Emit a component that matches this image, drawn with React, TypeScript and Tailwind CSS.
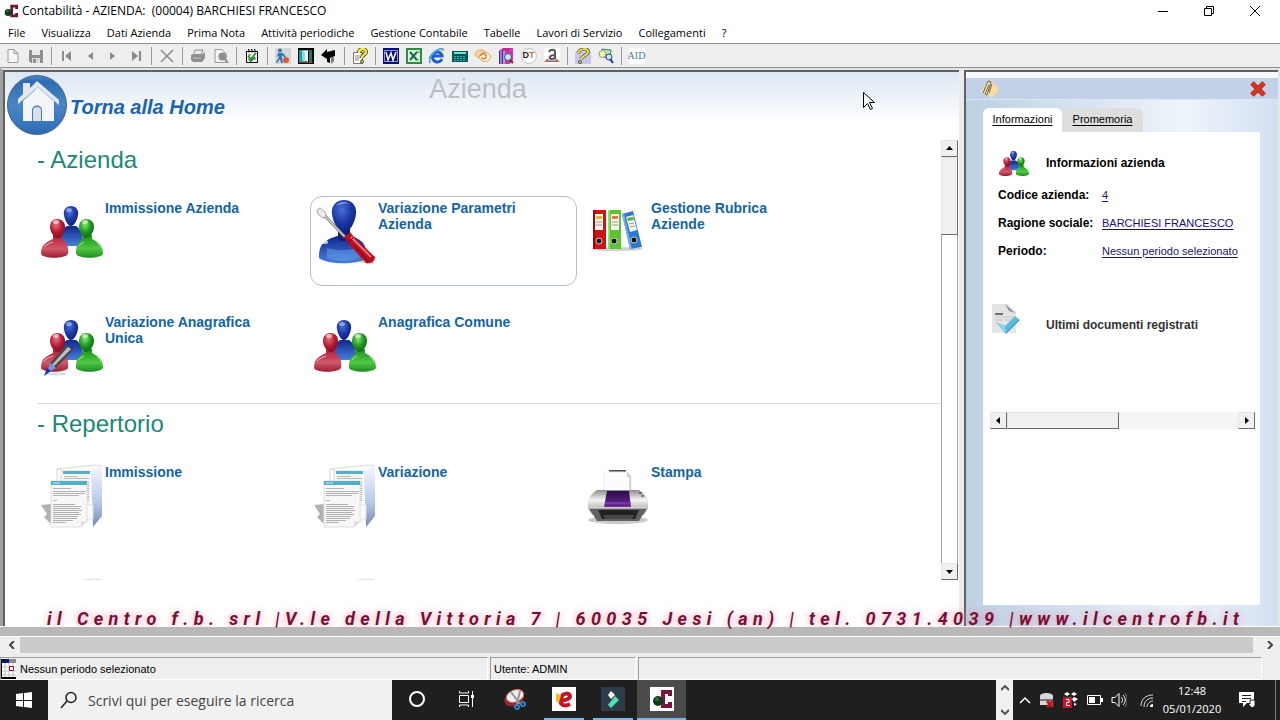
import React from 'react';
import clsx from 'clsx';

interface IconProps {
  className?: string;
}

/* ---------- toolbar icons (16x16) ---------- */

const toolIcons: Record<string, React.ReactNode> = {
  nuovo: <path d="M3 1.500h6l4 4v9H3zM9 1.500v4h4" fill="#f6f6f6" stroke="#9a9a9a" />,
  salva: (
    <>
      <path d="M1 2h14v13H3l-2-2z" fill="#8f8f8f" />
      <path d="M4 2h8v5H4z" fill="#e9e9e9" />
      <path d="M4 10h8v5H4z" fill="#dcdcdc" />
      <path d="M5 11h3v4H5z" fill="#8f8f8f" />
    </>
  ),
  primo: <path d="M3 3h2v10H3zM12 3v10L6 8z" fill="#8a8a8a" />,
  precedente: <path d="M11 4v8L6 8z" fill="#8a8a8a" />,
  successivo: <path d="M5 4v8l5-4z" fill="#8a8a8a" />,
  ultimo: <path d="M11 3h2v10h-2zM4 3v10l6-5z" fill="#8a8a8a" />,
  elimina: <path d="M2 2l12 12M14 2L2 14" stroke="#8a8a8a" strokeWidth="1.500" fill="none" />,
  stampa: (
    <>
      <path d="M5 2h8l-2 5H3z" fill="#e8e8e8" stroke="#8f8f8f" />
      <path d="M1 7l2-1h10l2-2v6l-3 4H3l-2-2z" fill="#8f8f8f" />
      <path d="M3 10h8" stroke="#c4c4c4" />
    </>
  ),
  anteprima: (
    <>
      <path d="M2 1.500h7l4 4v9H2z" fill="#f2f2f2" stroke="#9a9a9a" />
      <circle cx="9.500" cy="8.500" r="4" fill="#8f8f8f" />
      <path d="M12 11l3 4" stroke="#8f8f8f" strokeWidth="2" />
    </>
  ),
  verifica: (
    <>
      <path d="M2.500 3.500h11v11h-11z" fill="#fff" stroke="#000" />
      <path d="M4 1.500h1v3M7 1.500h1v3M10 1.500h1v3" stroke="#000" fill="none" />
      <path d="M4 7h3M4 11h2M10 11h2" stroke="#444" />
      <path d="M4 8l3 3 5-6M5 12l2 1 4-4" stroke="#18861c" strokeWidth="1.500" fill="none" />
    </>
  ),
  persona: (
    <>
      <path d="M0 0h16v16H0z" fill="#d2d6da" />
      <circle cx="5" cy="2.500" r="2" fill="#2a78b4" />
      <path d="M3 5h5l3 4-1 1-3-3v3l1 5H6l-1-4-3 4-1-1 3-5V8l-2 1z" fill="#2a78b4" />
      <circle cx="11" cy="12" r="3" fill="#e0572c" />
    </>
  ),
  porta: (
    <>
      <path d="M0 0h16v16H0z" fill="#000" />
      <path d="M1 2h6v12H1z" fill="#12a6a0" />
      <path d="M4 3l6-1v12l-6-2z" fill="#fff" />
      <path d="M4 3l3 1v10l-3-2z" fill="#7ee0dc" />
      <path d="M11 2h3v12h-3z" fill="#087f7b" />
      <path d="M1 14h14v1H1z" fill="#a5302a" />
    </>
  ),
  indietro: (
    <>
      <path d="M0 7l6-6v3l8-2v6l-5 2v5l-3-1v-3z" fill="#000" />
      <path d="M10 10l3-2v5l-3 3z" fill="#777" />
    </>
  ),
  documento: (
    <>
      <path d="M1.500 4.500h9v11h-9z" fill="#fff" stroke="#777" />
      <path d="M3 8h5M3 10h5M3 12h4" stroke="#888" />
      <path d="M7 5c0-5 7-5 7-1 0 3-4 2-4 6" fill="none" stroke="#333" strokeWidth="4" />
      <path d="M7 5c0-5 7-5 7-1 0 3-4 2-4 6" fill="none" stroke="#f4ee2c" strokeWidth="2.500" />
      <circle cx="10" cy="13.500" r="1.500" fill="#f4ee2c" stroke="#333" />
    </>
  ),
  word: (
    <>
      <path d="M0 0h16v16H0z" fill="#06107c" />
      <path d="M1.500 2.500h13v11h-13z" fill="none" stroke="#8c98dc" />
      <path d="M3 4l2 8 3-7 2 7 3-8" fill="none" stroke="#fff" strokeWidth="1.500" />
    </>
  ),
  excel: (
    <>
      <path d="M0 0h16v16H0z" fill="#2f8c44" />
      <path d="M2 2h12v12H2z" fill="#dff4e4" />
      <path d="M4 4l7 8M11 4l-7 8" stroke="#14703a" strokeWidth="2" />
      <path d="M9 12h4M10 4h4" stroke="#2f8c44" />
    </>
  ),
  explorer: (
    <>
      <path d="M13 11a5 5 0 1 1 0-4v1H5" fill="none" stroke="#1c62c0" strokeWidth="3" />
      <path d="M1 15C-2 9 9-2 15 2" fill="none" stroke="#4ca0e8" strokeWidth="2" />
      <path d="M11 1l3 1-1 3" fill="#f0cd3c" />
    </>
  ),
  calcolatrice: (
    <>
      <path d="M0 3h16v11H0z" fill="#04575a" />
      <path d="M2 4h12v2H2z" fill="#7be0c8" />
      <path d="M2 8.500h12M2 10.500h12M2 12.500h12" stroke="#31b4a2" strokeDasharray="2 1" />
    </>
  ),
  spirale: (
    <>
      <ellipse cx="6" cy="6" rx="5.500" ry="4" fill="#f5d7a0" stroke="#e5a24a" />
      <ellipse cx="10" cy="9" rx="5.500" ry="4.500" fill="#fff3db" stroke="#d9a45c" />
      <path d="M5 8c2-4 7-2 6 1s-4 2-4 0" fill="none" stroke="#d08434" strokeWidth="1.500" />
    </>
  ),
  libro: (
    <>
      <path d="M1 3l4-3h10l-3 3z" fill="#c42b9c" />
      <path d="M1 3h4v13H1z" fill="#3a2ca8" />
      <path d="M5 3h7l3-3v12l-3 4H5z" fill="#c23aa4" />
      <path d="M3 3v13M6 3v13" stroke="#e8e0ff" />
      <circle cx="10" cy="9" r="3.500" fill="#b9effa" stroke="#4a4a86" />
      <path d="M12 12l3 3" stroke="#9c1c1c" strokeWidth="2" />
    </>
  ),
  conto: (
    <>
      <path d="M0 0h16v16H0z" fill="#fff" />
      <path d="M5 4c1-3 6-3 6 0v7M11 7c-6 0-7 4-3 4 2 0 3-1 3-2" fill="none" stroke="#5a5560" strokeWidth="2" />
      <path d="M0 14l3-3h2l-1 2h8l-1-2h2l3 3z" fill="#e0653a" />
      <path d="M4 13h8" stroke="#3b74b8" />
    </>
  ),
  aiuto: (
    <>
      <path d="M0 4h16v12H0z" fill="#c9c4f0" />
      <path d="M3 5c2-5 11-5 10-1-1 4-5 3-7 7" fill="none" stroke="#555" strokeWidth="3.500" />
      <path d="M3 5c2-5 11-5 10-1-1 4-5 3-7 7" fill="none" stroke="#ece64a" strokeWidth="2" />
      <circle cx="5" cy="14" r="1.500" fill="#ece64a" stroke="#444" />
    </>
  ),
  cerca: (
    <>
      <path d="M4 1l9 1-1 8-8-1z" fill="#b5e5b8" stroke="#3d8c62" />
      <circle cx="4.500" cy="6" r="3.500" fill="#f3f1a8" stroke="#8f9c80" />
      <circle cx="11" cy="9" r="3" fill="#c6ecfa" stroke="#2b3f88" />
      <path d="M12 11l3 4" stroke="#20309a" strokeWidth="2" />
    </>
  ),
};

const ToolIcon: React.FC<{ name: string }> = ({ name }) => {
  if (name === 'dt') {
    return (
      <span className="flex size-4 items-center justify-center rounded-full border border-[#c4c4c4] bg-white font-['Liberation_Sans'] text-[9px] font-bold leading-none">
        <span className="text-[#222]">D</span>
        <span className="text-[#d9651c]">T</span>
      </span>
    );
  }
  if (name === 'ad') {
    return (
      <span className="flex size-4 items-center justify-center bg-white font-['Liberation_Serif'] text-[10px] leading-none">
        <span className="text-[#3f74a4]">A</span>
        <span className="text-[#3e9c4c]">I</span>
        <span className="text-[#3f74a4]">D</span>
      </span>
    );
  }
  return (
    <svg viewBox="0 0 16 16" className="size-4">
      {toolIcons[name]}
    </svg>
  );
};

/* ---------- big icons (66x66) ---------- */

const Gradients = () => (
  <defs>
    <radialGradient id="gBlue" cx="0.4" cy="0.3" r="0.8">
      <stop offset="0" stopColor="#4a70d8" />
      <stop offset="0.5" stopColor="#1a38a4" />
      <stop offset="1" stopColor="#0a1a6e" />
    </radialGradient>
    <radialGradient id="gRed" cx="0.4" cy="0.3" r="0.8">
      <stop offset="0" stopColor="#e87080" />
      <stop offset="0.5" stopColor="#b41c34" />
      <stop offset="1" stopColor="#78081c" />
    </radialGradient>
    <radialGradient id="gGreen" cx="0.4" cy="0.3" r="0.8">
      <stop offset="0" stopColor="#80e870" />
      <stop offset="0.5" stopColor="#209420" />
      <stop offset="1" stopColor="#0a6010" />
    </radialGradient>
    <linearGradient id="gBlueBody" x1="0" y1="0" x2="0" y2="1">
      <stop offset="0" stopColor="#12268c" />
      <stop offset="1" stopColor="#4580dc" />
    </linearGradient>
    <linearGradient id="gRedBody" x1="0" y1="0" x2="0" y2="1">
      <stop offset="0" stopColor="#b01c30" />
      <stop offset="0.6" stopColor="#d0586c" />
      <stop offset="1" stopColor="#9c1c30" />
    </linearGradient>
    <linearGradient id="gGreenBody" x1="0" y1="0" x2="0" y2="1">
      <stop offset="0" stopColor="#159018" />
      <stop offset="0.6" stopColor="#50c844" />
      <stop offset="1" stopColor="#1c8c1c" />
    </linearGradient>
    <linearGradient id="gSide" x1="0" y1="0" x2="0" y2="1">
      <stop offset="0" stopColor="#f4f7fd" />
      <stop offset="0.6" stopColor="#b5c8ec" />
      <stop offset="1" stopColor="#7488ae" />
    </linearGradient>
    <linearGradient id="gSilver" x1="0" y1="0" x2="0" y2="1">
      <stop offset="0" stopColor="#8c8c8c" />
      <stop offset="0.4" stopColor="#f4f4f4" />
      <stop offset="1" stopColor="#8c8c8c" />
    </linearGradient>
    <linearGradient id="gPurple" x1="0" y1="0" x2="0" y2="1">
      <stop offset="0" stopColor="#2c0a48" />
      <stop offset="1" stopColor="#6c2c9c" />
    </linearGradient>
  </defs>
);

const peopleShapes = (
  <>
    <path d="M21 48c-1-9 2-17 7-20h9c5 3 8 11 7 20z" fill="url(#gBlueBody)" />
    <path d="M32 8c5 0 8 4 7 9-1 6-4 11-7 11s-6-5-7-11c-1-5 2-9 7-9z" fill="url(#gBlue)" />
    <path d="M2 56c0-8 3-11 12-15v-4h9v4c5 3 7 8 6 15-3 5-25 5-27 0z" fill="url(#gRedBody)" />
    <path d="M18 21c5 0 8 3 8 8 0 6-4 11-7 11s-8-5-8-11c0-5 3-8 7-8z" fill="url(#gRed)" />
    <path d="M37 56c0-8 1-11 7-15v-4h9v4c8 4 11 7 11 15-3 5-24 5-27 0z" fill="url(#gGreenBody)" />
    <path d="M47 21c5 0 8 3 8 8 0 6-5 11-8 11s-7-5-7-11c0-5 3-8 7-8z" fill="url(#gGreen)" />
    <ellipse cx="30" cy="12" rx="3" ry="2" fill="#fff" opacity="0.4" />
    <ellipse cx="17" cy="24" rx="3" ry="2" fill="#fff" opacity="0.6" />
    <ellipse cx="46" cy="24" rx="3" ry="2" fill="#fff" opacity="0.6" />
    <path d="M5 49c3-3 6-4 9-5M40 48c1-2 3-3 5-4M58 45c2 1 4 3 4 5" stroke="#fff" opacity="0.6" fill="none" />
  </>
);

const PeopleIcon: React.FC<IconProps> = ({ className }) => (
  <svg viewBox="0 0 66 66" className={className}>
    <Gradients />
    {peopleShapes}
  </svg>
);

const PeoplePenIcon: React.FC<IconProps> = ({ className }) => (
  <svg viewBox="0 0 66 66" className={className}>
    <Gradients />
    {peopleShapes}
    <ellipse cx="17" cy="62" rx="11" ry="1.500" fill="#a9bdf0" opacity="0.5" />
    <path d="M28 33l6 5-17 18-6-5z" fill="#4a4a50" />
    <path d="M29 35l3 2-17 17-2-1z" fill="#c0c0c6" />
    <path d="M11 51l6 5-9 5z" fill="#6f98dc" />
    <path d="M8 56l4 3-7 5z" fill="#1434b8" />
    <path d="M28 33l6 5 1-4-3-3z" fill="#223a9c" />
  </svg>
);

const UserToolIcon: React.FC<IconProps> = ({ className }) => (
  <svg viewBox="0 0 66 66" className={className}>
    <Gradients />
    <path d="M7 60c0-13 3-17 18-22h14c12 4 16 9 16 22-8 7-40 7-48 0z" fill="url(#gBlueBody)" />
    <path d="M26 30h12v10c-3 4-9 4-12 0z" fill="#0c1c78" />
    <path d="M32 2c8 0 13 6 12 14-1 9-7 19-12 19S21 25 20 16C19 8 24 2 32 2z" fill="url(#gBlue)" />
    <path d="M24 8c3-5 10-5 14-2-5-1-10 0-14 2z" fill="#fff" opacity="0.4" />
    <ellipse cx="13" cy="44" rx="3" ry="2" fill="#fff" opacity="0.7" />
    <path d="M15 50c10 3 20 3 29 0l4 9c-10 5-23 5-33 1z" fill="#6ba4f2" opacity="0.5" />
    <path d="M42 60c8 4 14 5 20 4" stroke="#777" strokeWidth="3" opacity="0.4" fill="none" />
    <path d="M5 12l3-2 5 4 2 5-4 1-5-4z" fill="#ececec" stroke="#a4a4a4" />
    <path d="M13 18l20 21" stroke="#8d8d8d" strokeWidth="3" />
    <path d="M13 18l20 21" stroke="#f2f2f2" />
    <path d="M32 39l6-5 4 5 21 20c0 4-4 7-9 6L36 45z" fill="#b80f24" />
    <path d="M39 39l20 20" stroke="#f4707c" strokeWidth="2" />
    <path d="M43 48l12 14" stroke="#7c0414" />
    <path d="M36 45l6-6" stroke="#6c0410" />
  </svg>
);

const BindersIcon: React.FC<IconProps> = ({ className }) => (
  <svg viewBox="0 0 66 66" className={className}>
    <ellipse cx="32" cy="51" rx="26" ry="2" fill="#d0d0d0" />
    <path d="M8 12h13v39H8z" fill="#cf1414" />
    <path d="M8 12h2v39H8z" fill="#9c0606" />
    <path d="M23 12h13v39H23z" fill="#5cc42c" />
    <path d="M23 12h2v39h-2z" fill="#8fe364" />
    <path d="M37 16l11-3 9 36-12 2z" fill="#2c78cc" />
    <path d="M37 16l2-1 8 36h-2z" fill="#73aee8" />
    <path d="M10 16h8v16h-8zM26 16h8v16h-8zM41 19l7-2 4 15-7 2z" fill="#f7f4ec" />
    <path d="M11 18h6v3h-6z" fill="#ecb23c" />
    <path d="M27 18h6v3h-6z" fill="#e8705c" />
    <path d="M42 20l6-1 1 3-6 1z" fill="#4cba3c" />
    <path d="M11 24h6M11 27h6M27 24h6M27 27h6M44 26l5-1M45 29l5-1" stroke="#9a9a9a" />
    <g fill="#111" stroke="#c8c8c8">
      <circle cx="14" cy="43" r="3" />
      <circle cx="29" cy="43" r="3" />
      <circle cx="49" cy="42" r="3" />
    </g>
  </svg>
);

const FolderDocsIcon: React.FC<IconProps> = ({ className }) => (
  <svg viewBox="0 0 66 66" className={className}>
    <Gradients />
    <path d="M2 43l10-1v20L5 55l3-3z" fill="#b2b2b2" />
    <path d="M18 7l38-4 7 1-8 5H18z" fill="#fbfbfc" stroke="#dcdcdc" />
    <path d="M18 7h4v14h-4z" fill="#fff" stroke="#d4d4d4" />
    <path d="M52 9l11-5v50l-9 11z" fill="url(#gSide)" />
    <path d="M23 9h28v52H23z" fill="#f4f4f4" />
    <path d="M24 9h27v3H24z" fill="#54b0c8" />
    <path d="M25 14.500h14M25 16.500h25" stroke="#bcbcbc" />
    <path d="M49 20v20" stroke="#b4b4b4" strokeWidth="2" strokeDasharray="1 1" />
    <path d="M45 43h9v14h-9z" fill="#fafafa" stroke="#e0e0e0" />
    <path d="M12 19h36v40l-6 6H12z" fill="#f7f7f7" stroke="#e0e0e0" />
    <path d="M12 19h36v4H12z" fill="#4fb0c6" />
    <path d="M14 21h7" stroke="#c9f0f7" />
    <path d="M14 26.500h18M14 29.500h33M14 31.500h32M14 33.500h26M14 38.500h4" stroke="#b4b4b4" />
    <path
      d="M14 42.500h22M14 44.500h28M14 46.500h27M14 48.500h29M14 50.500h26M14 52.500h28M14 54.500h25M14 56.500h24M14 58.500h20M14 60.500h13"
      stroke="#b0b0b0"
    />
    <path d="M42 65l6-6-6 1z" fill="#dedede" />
  </svg>
);

const PrinterIcon: React.FC<IconProps> = ({ className }) => (
  <svg viewBox="0 0 66 66" className={className}>
    <Gradients />
    <ellipse cx="33" cy="58" rx="30" ry="4" fill="#b4b4b4" opacity="0.7" />
    <path d="M24 8h17v4H24z" fill="#4c4c4c" />
    <path d="M19 10h24l3 4v16H19z" fill="#fcfcfc" stroke="#ececec" />
    <path d="M45 14v14" stroke="#b4b4b4" />
    <path d="M42 10l4 5h-4z" fill="#c8c8c8" />
    <path d="M12 28h42c5 3 8 7 9 11v7c-1 3-3 5-5 7H8c-2-2-4-4-5-7v-7c1-4 4-8 9-11z" fill="url(#gSilver)" />
    <path d="M4 46h58l-8 13H12z" fill="#626262" />
    <path d="M13 48h41l-4 9H17z" fill="#222" />
    <path d="M18 53h31l-2 4H20z" fill="#484848" />
    <path d="M22 29h22l2 16H19z" fill="url(#gPurple)" />
    <path d="M20 41h26" stroke="#8a4cb4" />
    <path d="M4 46h58" stroke="#ececec" />
    <path d="M54 31h3M56 34h3" stroke="#333" />
  </svg>
);

const HomeIcon: React.FC<IconProps> = ({ className }) => (
  <svg viewBox="0 0 60 60" className={className}>
    <defs>
      <linearGradient id="homeBg" x1="0" y1="0" x2="0" y2="1">
        <stop offset="0" stopColor="#4a8cca" />
        <stop offset="0.1" stopColor="#2c6cb0" />
        <stop offset="0.5" stopColor="#4a86c6" />
        <stop offset="1" stopColor="#2c6cb4" />
      </linearGradient>
    </defs>
    <circle cx="30" cy="30" r="29.500" fill="url(#homeBg)" stroke="#4c6484" />
    <path d="M16 26L31 12l16 14v20H35V35c0-6-10-6-10 0v11H16z" fill="#f3f5f8" />
    <path d="M26 46V35c0-4 8-4 8 0v11z" fill="#dcdfe6" />
    <path d="M11 29v-5l5-5V8h7v5l7-7 22 19v5L31 12z" fill="#e4e8ee" />
    <path d="M16 26l15-14 16 14" fill="none" stroke="#b4c4d8" />
  </svg>
);

const ContabilitaLogo: React.FC<IconProps> = ({ className }) => (
  <svg viewBox="0 0 20 20" className={className}>
    <path d="M18 7V3h-7v14h7v-4" fill="none" stroke="#76143e" strokeWidth="4" />
    <circle cx="6" cy="12" r="5" fill="#123a1c" />
    <circle cx="5" cy="10" r="2" fill="#2c6c38" />
  </svg>
);

const CheckedDocIcon: React.FC<IconProps> = ({ className }) => (
  <svg viewBox="0 0 30 32" className={className}>
    <path d="M1 1h16l8 8v21H1z" fill="#e4e4e4" />
    <path d="M14 1l10 9-6-2z" fill="#8c8c8c" />
    <path d="M4 11h8" stroke="#444" strokeWidth="1.500" />
    <path d="M4 14h18M4 17h8M14 17h8" stroke="#c4c4c4" />
    <path d="M5 19l9 4 10-10 5 4-14 14z" fill="#58bcdc" />
    <path d="M5 19l9 4 1 8z" fill="#8cd4ec" />
    <path d="M15 30l13-13" fill="none" stroke="#2a90bc" />
  </svg>
);

/* ---------- data ---------- */

const menuItems = [
  'File',
  'Visualizza',
  'Dati Azienda',
  'Prima Nota',
  'Attività periodiche',
  'Gestione Contabile',
  'Tabelle',
  'Lavori di Servizio',
  'Collegamenti',
  '?',
];

const toolGroups = [
  ['nuovo', 'salva'],
  ['primo', 'precedente', 'successivo', 'ultimo'],
  ['elimina'],
  ['stampa', 'anteprima'],
  ['verifica'],
  ['persona', 'porta', 'indietro'],
  ['documento'],
  ['word', 'excel', 'explorer', 'calcolatrice', 'spirale', 'libro', 'dt', 'conto'],
  ['aiuto', 'cerca'],
  ['ad'],
];

interface Entry {
  label: string;
  icon: React.FC<IconProps>;
  active?: boolean;
}

const sections: { title: string; entries: Entry[] }[] = [
  {
    title: 'Azienda',
    entries: [
      { label: 'Immissione Azienda', icon: PeopleIcon },
      { label: 'Variazione Parametri Azienda', icon: UserToolIcon, active: true },
      { label: 'Gestione Rubrica Aziende', icon: BindersIcon },
      { label: 'Variazione Anagrafica Unica', icon: PeoplePenIcon },
      { label: 'Anagrafica Comune', icon: PeopleIcon },
    ],
  },
  {
    title: 'Repertorio',
    entries: [
      { label: 'Immissione', icon: FolderDocsIcon },
      { label: 'Variazione', icon: FolderDocsIcon },
      { label: 'Stampa', icon: PrinterIcon },
      { label: '', icon: FolderDocsIcon },
      { label: '', icon: FolderDocsIcon },
    ],
  },
];

const companyInfo = [
  { label: 'Codice azienda:', value: '4' },
  { label: 'Ragione sociale:', value: 'BARCHIESI FRANCESCO' },
  { label: 'Periodo:', value: 'Nessun periodo selezionato' },
];

/* ---------- pieces ---------- */

const arrows = {
  up: 'M1 6h7L4.500 2z',
  down: 'M1 3h7L4.500 7z',
  left: 'M6 1v7L2 4.500z',
  right: 'M3 1v7l4-3.500z',
};

const ScrollButton: React.FC<{ dir: keyof typeof arrows }> = ({ dir }) => (
  <button
    type="button"
    aria-label={dir}
    className="flex size-[17px] shrink-0 items-center justify-center border border-b-[#6a6a6a] border-l-[#e4e4e4] border-r-[#6a6a6a] border-t-[#e4e4e4] bg-[#f0f0f0]"
  >
    <svg viewBox="0 0 9 9" className="size-[9px]">
      <path d={arrows[dir]} fill="#000" />
    </svg>
  </button>
);

const TitleBar = () => (
  <header className="flex h-[22px] shrink-0 items-center bg-white pl-1">
    <ContabilitaLogo className="mr-1 size-[14px]" />
    <h1 className="flex-1 whitespace-pre text-[12px] leading-4">
      {'Contabilità - AZIENDA:  (00004) BARCHIESI FRANCESCO'}
    </h1>
    <div className="flex">
      <button type="button" aria-label="Riduci a icona" className="flex w-[46px] justify-center">
        <svg viewBox="0 0 10 10" className="size-[10px]">
          <path d="M0 5.500h10" stroke="#000" />
        </svg>
      </button>
      <button type="button" aria-label="Ripristina" className="flex w-[46px] justify-center">
        <svg viewBox="0 0 10 10" className="size-[10px]">
          <path d="M.5 2.500h7v7h-7zM2.500 2.500v-2h7v7h-2" fill="none" stroke="#000" />
        </svg>
      </button>
      <button type="button" aria-label="Chiudi" className="mr-[2px] flex w-[46px] justify-center">
        <svg viewBox="0 0 10 10" className="size-[10px]">
          <path d="M0 0l10 10M10 0L0 10" stroke="#000" />
        </svg>
      </button>
    </div>
  </header>
);

const MenuBar = () => (
  <nav className="flex h-[21px] shrink-0 items-center bg-white">
    {menuItems.map((item) => (
      <button key={item} type="button" className="px-2 text-[11px] leading-4">
        {item}
      </button>
    ))}
  </nav>
);

const Toolbar = () => (
  <div className="flex h-[25px] shrink-0 items-center border-y border-[#8f8f8f] bg-[#eeeeee] pl-px">
    {toolGroups.map((group, i) => (
      <div key={i} className="flex items-center">
        {i > 0 && (
          <div className="flex w-2 justify-center">
            <div className="h-[18px] w-px bg-[#9a9a9a]" />
          </div>
        )}
        {group.map((name) => (
          <button key={name} type="button" aria-label={name} className="flex w-[23px] justify-center">
            <ToolIcon name={name} />
          </button>
        ))}
      </div>
    ))}
  </div>
);

const EntryCard: React.FC<{ entry: Entry }> = ({ entry }) => {
  const Icon = entry.icon;
  return (
    <button
      type="button"
      className={clsx(
        'flex h-[90px] items-start rounded-xl border pl-px pr-8 pt-px text-left',
        entry.active ? 'border-[#b4c0c8]' : 'border-transparent',
      )}
    >
      <Icon className="size-[66px] shrink-0" />
      <span className="pt-[2px] text-[14px] font-bold leading-4 text-[#1464a4]">{entry.label}</span>
    </button>
  );
};

const MainPane = () => (
  <main className="flex min-w-0 flex-1 flex-col border-l-2 border-t-2 border-[#5f6264] bg-white">
    <div className="grid h-[68px] shrink-0 grid-cols-3 bg-linear-to-b from-[#dde7f3] to-white to-75%">
      <a href="#home" className="flex items-center gap-[3px] pb-[2px] pl-[2px] text-[20px] font-bold italic text-[#1a64ac]">
        <HomeIcon className="size-[60px]" />
        <span className="pt-1">Torna alla Home</span>
      </a>
      <h2 className="pr-2 text-center text-[27px] leading-[34px] text-[#bcbfc2]">Azienda</h2>
    </div>
    <div className="mr-px flex h-[440px] shrink-0">
      <div className="min-w-0 flex-1 overflow-hidden pl-8">
        {sections.map((section, i) => (
          <section key={section.title} className={clsx('pb-[3px] pt-1', i > 0 && 'border-t border-[#dadddd]')}>
            <h3 className="mb-5 text-[24px] leading-8 text-[#1c8874]">- {section.title}</h3>
            <div className="grid grid-cols-[repeat(3,267px)] gap-x-[6px] gap-y-6">
              {section.entries.map((entry, j) => (
                <EntryCard key={j} entry={entry} />
              ))}
            </div>
          </section>
        ))}
      </div>
      <div className="flex w-[17px] flex-col border-x border-[#a4a4a4] bg-white">
        <div className="-mx-px">
          <ScrollButton dir="up" />
        </div>
        <div className="-mx-px h-[78px] border border-b-[#6a6a6a] border-l-[#e4e4e4] border-r-[#6a6a6a] border-t-[#e4e4e4] bg-[#f0f0f0]" />
        <div className="flex-1" />
        <div className="-mx-px">
          <ScrollButton dir="down" />
        </div>
      </div>
    </div>
  </main>
);

const SidePanel = () => (
  <aside className="flex w-[314px] shrink-0 flex-col border-l-2 border-t-2 border-[#5f6264] bg-linear-to-r from-[#bed0e4] via-[#eef4fb] via-70% to-[#d3e0f2]">
    <div className="h-[6px] shrink-0 bg-[#f4faff]" />
    <div className="flex h-[22px] shrink-0 items-center justify-between border-b border-[#dbe7f5] bg-[#c3d1e8] pl-[14px] pr-[11px]">
      <svg viewBox="0 0 20 20" className="size-5">
        <path d="M7 3l5-1 7 9-7 8-11-7z" fill="#fbdc9c" />
        <path d="M3 14L8 2l3 1-4 13-2-1 4-9M9 14l3-9" fill="none" stroke="#66675c" />
      </svg>
      <button type="button" aria-label="Chiudi pannello">
        <svg viewBox="0 0 18 18" className="size-[18px]">
          <path d="M3 3l12 12M15 3L3 15" stroke="#b42814" strokeWidth="5" />
          <path d="M3 3l12 12M15 3L3 15" stroke="#d83420" strokeWidth="3" />
        </svg>
      </button>
    </div>
    <div className="mb-[21px] ml-[17px] mr-[18px] mt-2 flex flex-1 flex-col">
      <div className="flex h-6 shrink-0 text-[11px]">
        <button type="button" className="w-[79px] rounded-t-md bg-white pb-[2px] underline underline-offset-2">
          Informazioni
        </button>
        <button type="button" className="w-[81px] rounded-t-md bg-[#dedede] pb-[2px] underline underline-offset-2">
          Promemoria
        </button>
      </div>
      <div className="flex-1 bg-white pt-4">
        <div className="flex h-[30px] items-center">
          <PeopleIcon className="ml-[15px] size-8" />
          <h4 className="ml-4 text-[12px] font-bold">Informazioni azienda</h4>
        </div>
        <dl className="ml-[15px] mt-[3px] text-[11px]">
          {companyInfo.map((row) => (
            <div key={row.label} className="flex h-7 items-center whitespace-nowrap">
              <dt className="w-[104px] text-[12px] font-bold">{row.label}</dt>
              <dd>
                <a href="#dettaglio" className="text-[#1c1464] underline underline-offset-2">
                  {row.value}
                </a>
              </dd>
            </div>
          ))}
        </dl>
        <div className="mt-9 flex h-9 items-center">
          <CheckedDocIcon className="ml-2 h-8 w-[30px]" />
          <h4 className="ml-[25px] pt-3 text-[12px] font-bold text-[#333]">Ultimi documenti registrati</h4>
        </div>
        <div className="ml-[7px] mr-[5px] mt-[75px] flex h-[17px] bg-[#f5f5f5]">
          <ScrollButton dir="left" />
          <div className="w-[112px] border border-b-[#6a6a6a] border-l-[#e4e4e4] border-r-[#6a6a6a] border-t-[#e4e4e4] bg-[#f0f0f0]" />
          <div className="flex-1" />
          <ScrollButton dir="right" />
        </div>
      </div>
    </div>
  </aside>
);

const StatusBar = () => (
  <footer className="flex h-[23px] shrink-0 gap-[2px] bg-[#eeeeee] pr-[18px] text-[11px] leading-[22px]">
    <div className="flex w-[488px] items-center border border-b-white border-l-[#9c9c9c] border-r-white border-t-[#9c9c9c]">
      <svg viewBox="0 0 15 20" className="mr-1 h-5 w-[15px]">
        <path d="M1 0h14v20H1z" fill="#fff" />
        <path d="M1 0h7v4H1z" fill="#0a1274" />
        <path d="M8 0h7v4H8z" fill="#8b8b8b" />
        <path d="M1 8h14M1 12h14M1 16h14M4 4v14M8 4v14M12 4v14" stroke="#c4bcc4" />
        <path d="M8.500 7.500h4v4h-4z" fill="#fff" stroke="#8c1020" />
        <path d="M1 18h14v2H1zM0 0h1v20H0z" fill="#000" />
      </svg>
      Nessun periodo selezionato
    </div>
    <div className="w-[146px] border border-b-white border-l-[#9c9c9c] border-r-white border-t-[#9c9c9c] pl-[3px]">
      Utente: ADMIN
    </div>
    <div className="flex-1 border border-b-white border-l-[#9c9c9c] border-r-white border-t-[#9c9c9c]" />
  </footer>
);

const TaskButton: React.FC<{ label: string; running?: boolean; active?: boolean; children: React.ReactNode }> = ({
  label,
  running,
  active,
  children,
}) => (
  <button
    type="button"
    aria-label={label}
    className={clsx('flex h-10 w-[49px] flex-col items-center', active && 'bg-[#4b4b4b]')}
  >
    <span className="flex flex-1 items-center">{children}</span>
    <span className={clsx('h-[2px]', active ? 'w-full' : 'w-10', (running || active) && 'bg-[#76b9ed]')} />
  </button>
);

const Taskbar = () => (
  <div className="flex h-10 shrink-0 items-center bg-[#1f1f1f] font-['Open_Sans'] text-white">
    <button type="button" aria-label="Start" className="flex h-10 w-12 items-center justify-center">
      <svg viewBox="0 0 16 16" className="size-4">
        <path d="M0 2l7-1v7H0zM8 1l8-1v8H8zM0 9h7v6l-7-1zM8 9h8v7l-8-1z" fill="#fff" />
      </svg>
    </button>
    <label className="flex h-10 w-[344px] items-center bg-[#f1f1f1] pl-3 text-[#444]">
      <svg viewBox="0 0 18 18" className="mr-[10px] size-[18px]">
        <circle cx="11" cy="6.500" r="5" fill="none" stroke="#222" strokeWidth="1.500" />
        <path d="M7 10l-6 7" stroke="#222" strokeWidth="1.500" />
      </svg>
      <input
        type="text"
        aria-label="Cerca"
        placeholder="Scrivi qui per eseguire la ricerca"
        className="min-w-0 flex-1 bg-transparent text-[14px] outline-none placeholder:text-[#444]"
      />
    </label>
    <TaskButton label="Cortana">
      <svg viewBox="0 0 18 18" className="size-[18px]">
        <circle cx="9" cy="9" r="7" fill="none" stroke="#fff" strokeWidth="2" />
      </svg>
    </TaskButton>
    <TaskButton label="Visualizzazione attività">
      <svg viewBox="0 0 18 18" className="size-[18px]">
        <path d="M2.500 5.500h9v7h-9zM2.500 1v2h9V1M2.500 17v-2h9v2M15.500 1v16" fill="none" stroke="#fff" />
        <path d="M14 5h3v3h-3z" fill="#fff" />
      </svg>
    </TaskButton>
    <TaskButton label="Strumento di cattura">
      <svg viewBox="0 0 24 24" className="size-6">
        <ellipse cx="11" cy="12" rx="10" ry="7" fill="#9a2430" transform="rotate(-20 11 12)" />
        <ellipse cx="12" cy="9" rx="9" ry="6" fill="#f0eeee" stroke="#d85c5c" transform="rotate(-20 12 9)" />
        <path d="M8 5l9 12M17 4l-3 13" stroke="#8d9aa4" strokeWidth="2" />
        <circle cx="14" cy="20" r="2" fill="none" stroke="#2c84c4" strokeWidth="2" />
        <circle cx="20" cy="17" r="2" fill="none" stroke="#2c84c4" strokeWidth="2" />
      </svg>
    </TaskButton>
    <TaskButton label="e/" running>
      <svg viewBox="0 0 24 24" className="size-6">
        <path d="M0 0h24v24H0z" fill="#fff" />
        <path d="M8 13c5 1 10-1 10-4s-7-4-9 2c-2 7 3 9 9 6" fill="none" stroke="#c4142c" strokeWidth="4" />
        <path d="M4 6l5 2-2 8-3-2z" fill="#f0c020" />
      </svg>
    </TaskButton>
    <TaskButton label="Filmora" running>
      <svg viewBox="0 0 24 24" className="size-6">
        <path d="M0 0h24v24H0z" fill="#2c3c48" />
        <path d="M10 4l4 4-4 4-3-4z" fill="#fff" />
        <path d="M14 9l4 4-8 8-3-3z" fill="#54dcb4" />
      </svg>
    </TaskButton>
    <TaskButton label="Contabilità" active>
      <span className="bg-white p-[2px]">
        <ContabilitaLogo className="size-5" />
      </span>
    </TaskButton>
    <div className="flex-1" />
    <div className="flex h-10 w-[17px] flex-col items-center justify-between bg-[#f0f0f0] py-[5px]">
      <svg viewBox="0 0 8 6" className="h-[6px] w-2">
        <path d="M0 5l4-4 4 4" fill="none" stroke="#555" strokeWidth="2" />
      </svg>
      <svg viewBox="0 0 8 6" className="h-[6px] w-2">
        <path d="M0 1l4 4 4-4" fill="none" stroke="#555" strokeWidth="2" />
      </svg>
    </div>
    <div className="flex items-center gap-2 pl-[6px]">
      <svg viewBox="0 0 12 8" className="h-2 w-3">
        <path d="M1 7l5-5 5 5" fill="none" stroke="#fff" strokeWidth="1.500" />
      </svg>
      <svg viewBox="0 0 16 16" className="size-4">
        <path d="M1 4c0-4 13-4 13 0v9H1z" fill="#d8d8d8" />
        <path d="M1 8h13" stroke="#777" strokeWidth="2" />
        <path d="M8 9l6 6M14 9l-6 6" stroke="#c41424" strokeWidth="3" />
      </svg>
      <svg viewBox="0 0 16 16" className="size-4">
        <path d="M4 0l3 2-3 2-3-2zM11 0l3 2-3 2-3-2zM11 5l4 2-4 3-2-3zM11 11l3 1-3 2z" fill="#fff" />
        <path d="M0 5h9v11H0z" fill="#c81426" />
        <path d="M3 7.500h3v3H3.500v3H7" fill="none" stroke="#fff" />
      </svg>
      <svg viewBox="0 0 16 16" className="size-4">
        <path d="M.5 3.500h13v9H.500z" fill="none" stroke="#fff" />
        <path d="M2 5h6v6H2zM14 6h2v4h-2z" fill="#fff" />
      </svg>
      <svg viewBox="0 0 16 16" className="size-4">
        <path d="M1 5.500h3l4-4v13l-4-4H1zM10 5c2 2 2 4 0 6M12 3c3 3 3 7 0 10" fill="none" stroke="#fff" />
        <path d="M14 1c3 4 3 10 0 14" fill="none" stroke="#888" />
      </svg>
      <svg viewBox="0 0 16 16" className="ml-1 size-4">
        <path d="M2 14C2 7 7 3 14 3M5 15C5 9 9 6 14 6M8 15c0-3 3-6 6-6" fill="none" stroke="#ddd" />
        <path d="M11 15c0-2 1-3 3-3v3z" fill="#fff" />
      </svg>
    </div>
    <div className="w-[74px] text-center text-[11px] leading-[18px]">
      <div>12:48</div>
      <div>05/01/2020</div>
    </div>
    <button type="button" aria-label="Notifiche" className="flex w-[36px] justify-center">
      <svg viewBox="0 0 18 18" className="size-[18px]">
        <path d="M1 1h15v11H9l-4 4v-4H1z" fill="#fff" />
        <path d="M4 4.500h9M4 7.500h9M4 10.500h4" stroke="#222" />
        <path d="M12 9v4h-2l4 4 3-2V9z" fill="#fff" stroke="#222" />
      </svg>
    </button>
    <div className="ml-[10px] mr-1 h-10 w-px bg-[#777]" />
  </div>
);

export default function App() {
  return (
    <div className="relative flex min-h-screen flex-col overflow-hidden bg-[#eeeeee] font-['Liberation_Sans',sans-serif] text-black">
      <div className="flex flex-col font-['Open_Sans',sans-serif]">
        <TitleBar />
        <MenuBar />
      </div>
      <Toolbar />
      <div className="flex flex-1 border-l-[3px] border-t-2 border-l-[#a0a0a0] border-t-[#e4e4e4]">
        <MainPane />
        <div className="w-[5px] shrink-0 bg-[#ececec]" />
        <SidePanel />
        <div className="w-[2px] shrink-0 bg-[#e6e6e6]" />
      </div>
      <div className="h-[10px] shrink-0 border-t border-white bg-[#b9b9b9]" />
      <div className="mb-1 flex h-[17px] shrink-0 items-center border-t border-white bg-[#efefef] pl-[3px]">
        <button type="button" aria-label="Scorri a sinistra" className="flex w-[17px] justify-center">
          <svg viewBox="0 0 6 8" className="h-2 w-[6px]">
            <path d="M5 0L1 4l4 4" fill="none" stroke="#444" strokeWidth="2" />
          </svg>
        </button>
        <div className="h-full flex-1 bg-[#cbcbcb]" />
        <button type="button" aria-label="Scorri a destra" className="mr-[7px] flex w-5 justify-end">
          <svg viewBox="0 0 6 8" className="h-2 w-[6px]">
            <path d="M1 0l4 4-4 4" fill="none" stroke="#444" strokeWidth="2" />
          </svg>
        </button>
      </div>
      <StatusBar />
      <Taskbar />

      {/* banner over the bottom of the window */}
      <p className="absolute bottom-[89px] left-[47px] whitespace-pre font-['Roboto'] text-[18px] font-bold italic leading-6 tracking-[0.3em] text-[#7c0c34] [text-shadow:0_0_8px_#e08c9c]">
        il Centro f.b. srl |V.le della Vittoria 7 | 60035 Jesi (an) | tel. 0731.4039 |www.ilcentrofb.it
      </p>

      {/* mouse pointer */}
      <svg viewBox="0 0 12 19" className="absolute left-[863px] top-[92px] h-[19px] w-3">
        <path d="M.5 .5v15l4-4 3 6 2-1-3-6h5z" fill="#fff" stroke="#000" />
      </svg>
    </div>
  );
}
